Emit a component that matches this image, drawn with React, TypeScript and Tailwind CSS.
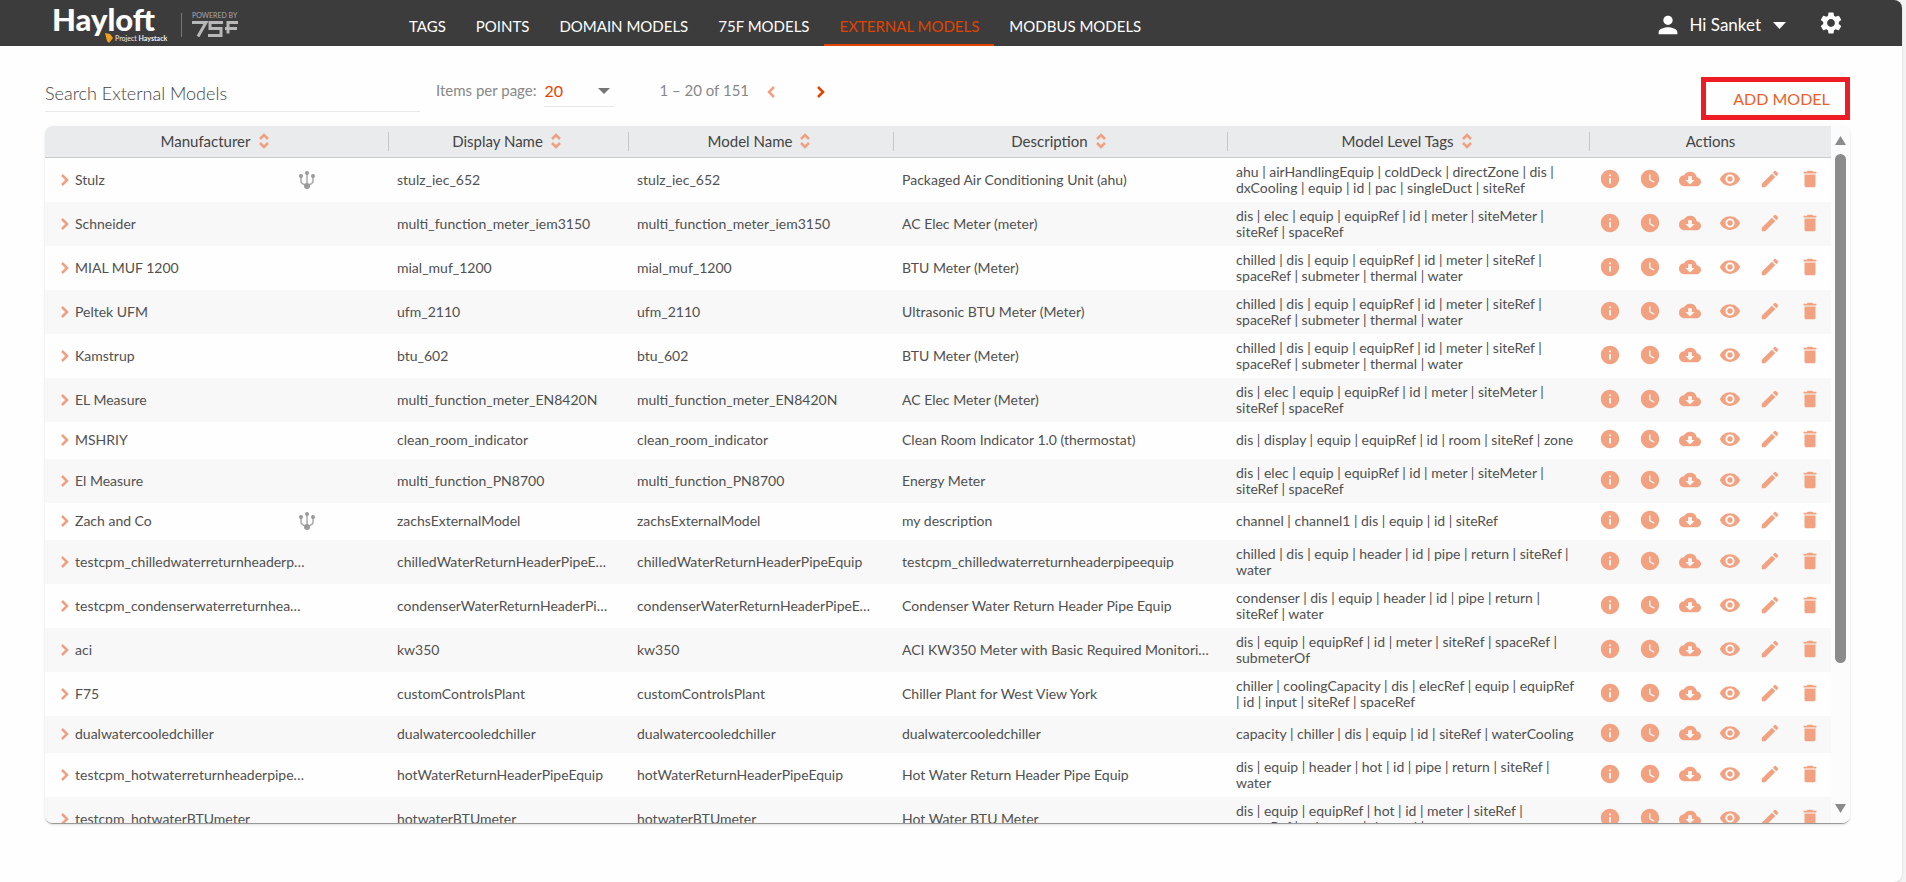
import { useState } from 'react'
import { MdInfo, MdWatchLater, MdCloudDownload, MdVisibility, MdEdit, MdDelete, MdSettings, MdPerson } from 'react-icons/md'

type Model = {
  manufacturer: string
  display: string
  model: string
  description: string
  tags: string
  linked?: boolean
}

const MODELS: Model[] = [
  { manufacturer: 'Stulz', display: 'stulz_iec_652', model: 'stulz_iec_652', description: 'Packaged Air Conditioning Unit (ahu)', tags: 'ahu | airHandlingEquip | coldDeck | directZone | dis | dxCooling | equip | id | pac | singleDuct | siteRef', linked: true },
  { manufacturer: 'Schneider', display: 'multi_function_meter_iem3150', model: 'multi_function_meter_iem3150', description: 'AC Elec Meter (meter)', tags: 'dis | elec | equip | equipRef | id | meter | siteMeter | siteRef | spaceRef' },
  { manufacturer: 'MIAL MUF 1200', display: 'mial_muf_1200', model: 'mial_muf_1200', description: 'BTU Meter (Meter)', tags: 'chilled | dis | equip | equipRef | id | meter | siteRef | spaceRef | submeter | thermal | water' },
  { manufacturer: 'Peltek UFM', display: 'ufm_2110', model: 'ufm_2110', description: 'Ultrasonic BTU Meter (Meter)', tags: 'chilled | dis | equip | equipRef | id | meter | siteRef | spaceRef | submeter | thermal | water' },
  { manufacturer: 'Kamstrup', display: 'btu_602', model: 'btu_602', description: 'BTU Meter (Meter)', tags: 'chilled | dis | equip | equipRef | id | meter | siteRef | spaceRef | submeter | thermal | water' },
  { manufacturer: 'EL Measure', display: 'multi_function_meter_EN8420N', model: 'multi_function_meter_EN8420N', description: 'AC Elec Meter (Meter)', tags: 'dis | elec | equip | equipRef | id | meter | siteMeter | siteRef | spaceRef' },
  { manufacturer: 'MSHRIY', display: 'clean_room_indicator', model: 'clean_room_indicator', description: 'Clean Room Indicator 1.0 (thermostat)', tags: 'dis | display | equip | equipRef | id | room | siteRef | zone' },
  { manufacturer: 'El Measure', display: 'multi_function_PN8700', model: 'multi_function_PN8700', description: 'Energy Meter', tags: 'dis | elec | equip | equipRef | id | meter | siteMeter | siteRef | spaceRef' },
  { manufacturer: 'Zach and Co', display: 'zachsExternalModel', model: 'zachsExternalModel', description: 'my description', tags: 'channel | channel1 | dis | equip | id | siteRef', linked: true },
  { manufacturer: 'testcpm_chilledwaterreturnheaderpipeequip', display: 'chilledWaterReturnHeaderPipeEquip', model: 'chilledWaterReturnHeaderPipeEquip', description: 'testcpm_chilledwaterreturnheaderpipeequip', tags: 'chilled | dis | equip | header | id | pipe | return | siteRef | water' },
  { manufacturer: 'testcpm_condenserwaterreturnheaderpipeequip', display: 'condenserWaterReturnHeaderPipeEquip', model: 'condenserWaterReturnHeaderPipeEquip', description: 'Condenser Water Return Header Pipe Equip', tags: 'condenser | dis | equip | header | id | pipe | return | siteRef | water' },
  { manufacturer: 'aci', display: 'kw350', model: 'kw350', description: 'ACI KW350 Meter with Basic Required Monitoring Points', tags: 'dis | equip | equipRef | id | meter | siteRef | spaceRef | submeterOf' },
  { manufacturer: 'F75', display: 'customControlsPlant', model: 'customControlsPlant', description: 'Chiller Plant for West View York', tags: 'chiller | coolingCapacity | dis | elecRef | equip | equipRef | id | input | siteRef | spaceRef' },
  { manufacturer: 'dualwatercooledchiller', display: 'dualwatercooledchiller', model: 'dualwatercooledchiller', description: 'dualwatercooledchiller', tags: 'capacity | chiller | dis | equip | id | siteRef | waterCooling' },
  { manufacturer: 'testcpm_hotwaterreturnheaderpipeequip', display: 'hotWaterReturnHeaderPipeEquip', model: 'hotWaterReturnHeaderPipeEquip', description: 'Hot Water Return Header Pipe Equip', tags: 'dis | equip | header | hot | id | pipe | return | siteRef | water' },
  { manufacturer: 'testcpm_hotwaterBTUmeter', display: 'hotwaterBTUmeter', model: 'hotwaterBTUmeter', description: 'Hot Water BTU Meter', tags: 'dis | equip | equipRef | hot | id | meter | siteRef | spaceRef | submeter | thermal | water' },
]

const TABS = ['TAGS', 'POINTS', 'DOMAIN MODELS', '75F MODELS', 'EXTERNAL MODELS', 'MODBUS MODELS']
const COLUMNS = ['Manufacturer', 'Display Name', 'Model Name', 'Description', 'Model Level Tags']
const ACTIONS = [
  { label: 'Info', Icon: MdInfo },
  { label: 'History', Icon: MdWatchLater },
  { label: 'Download', Icon: MdCloudDownload },
  { label: 'View', Icon: MdVisibility },
  { label: 'Edit', Icon: MdEdit },
  { label: 'Delete', Icon: MdDelete },
]

function Logo() {
  return (
    <svg width="196" height="46" viewBox="0 0 196 46" role="img" aria-label="Hayloft, powered by 75F" fontFamily="Lato, sans-serif">
      <text x="0" y="31" fontSize="31" fontWeight="900" fill="#fff">Hayloft</text>
      <path d="M53 33l5 1 3 4-4 5-2-2-1-4z" fill="#f0a020" />
      <text x="63" y="41" fontSize="7" fill="#eee">
        Project <tspan fontWeight="700">Haystack</tspan>
      </text>
      <path d="M129.500 13v24" stroke="#777" />
      <text x="140" y="18" fontSize="7" fill="#aaa">POWERED BY</text>
      <g fill="none" stroke="#b8b8b8" strokeWidth="3">
        <path d="M140 22.500h14l-8 14" />
        <path d="M171 22.500h-13v6h11v7h-13" />
        <path d="M186 22.500h-10v11M173 28.500h12" />
      </g>
    </svg>
  )
}

function SortIcon() {
  return (
    <svg width="10" height="16" viewBox="0 0 10 16" fill="none" stroke="#f0a080" strokeWidth="2.500" aria-hidden="true">
      <path d="M1 6l4-4 4 4M1 10l4 4 4-4" />
    </svg>
  )
}

function Chevron({ flip = false, className = '' }: { flip?: boolean; className?: string }) {
  return (
    <svg width="8" height="14" viewBox="0 0 8 14" fill="none" stroke="currentColor" strokeWidth="2.500" className={className} aria-hidden="true">
      <path d={flip ? 'M7 2L2 7l5 5' : 'M1 2l5 5-5 5'} />
    </svg>
  )
}

function LinkedIcon() {
  return (
    <svg width="16" height="18" viewBox="0 0 16 18" fill="#999" aria-label="Linked" className="shrink-0">
      <path d="M2 6v4q0 3 5 4M14 6v4q0 3-5 4M8 3v10" fill="none" stroke="#aaa" strokeWidth="1.500" />
      <circle cx="2" cy="5" r="2" />
      <circle cx="8" cy="2" r="2" />
      <circle cx="14" cy="5" r="2" />
      <circle cx="8" cy="15" r="3" />
    </svg>
  )
}

function Header() {
  return (
    <header className="flex h-[46px] items-stretch rounded-tr-lg bg-[#3c3c3c] pl-[52px] pr-[58px] text-white">
      <div className="w-[342px]">
        <Logo />
      </div>
      <nav className="flex flex-1 items-stretch">
        {TABS.map(t => (
          <a
            key={t}
            href="#"
            className={
              t === 'EXTERNAL MODELS'
                ? 'flex items-center border-b-2 border-[#e24301] px-[15px] pt-2 text-[15px] text-[#e24301]'
                : 'flex items-center border-b-2 border-transparent px-[15px] pt-2 text-[15px]'
            }
          >
            {t}
          </a>
        ))}
      </nav>
      <button className="mr-6 flex items-center gap-2 pt-1 text-[17px]">
        <MdPerson size={28} />
        Hi Sanket
        <svg width="13" height="7" viewBox="0 0 13 7" fill="currentColor" className="ml-1 mr-2" aria-hidden="true"><path d="M0 0h13L6.500 7z" /></svg>
      </button>
      <button aria-label="Settings">
        <MdSettings size={26} />
      </button>
    </header>
  )
}

function Toolbar() {
  const [query, setQuery] = useState('')

  return (
    <div className="flex h-20 items-start pl-[45px] pr-[52px]">
      <input
        aria-label="Search External Models"
        placeholder="Search External Models"
        value={query}
        onChange={e => setQuery(e.target.value)}
        className="mt-[30px] h-9 w-[375px] border-b border-[#e8e8e8] pb-0.5 text-lg font-light outline-none placeholder:text-[#444]"
      />
      <label htmlFor="page-size" className="ml-4 mt-[33px] text-[15px] text-[#888]">Items per page:</label>
      <div className="relative ml-2 mt-7 w-[70px] border-b border-[#e8e8e8]">
        <select id="page-size" defaultValue="20" className="h-8 w-full appearance-none pt-0.5 text-base text-[#e24301] outline-none">
          <option>20</option>
          <option>50</option>
        </select>
        <svg width="12" height="6" viewBox="0 0 12 6" fill="#757575" className="pointer-events-none absolute right-1 top-[14px]" aria-hidden="true"><path d="M0 0h12L6 6z" /></svg>
      </div>
      <span className="ml-[45px] mt-[33px] text-[15px] text-[#888]">1 – 20 of 151</span>
      <button aria-label="Previous page" className="ml-[18px] mt-[39px] text-[#f0a080]"><Chevron flip /></button>
      <button aria-label="Next page" className="ml-[42px] mt-[39px] text-[#e24301]"><Chevron /></button>
      <button className="ml-auto mt-[31px] h-[43px] w-[149px] border-5 border-[#ee1c25] pl-3 text-base text-[#e8602c]">ADD MODEL</button>
    </div>
  )
}

function ModelsTable() {
  return (
    <div className="ml-[45px] mr-[52px] flex h-[698px] overflow-hidden rounded-lg border-b border-[#999] shadow">
      <div className="min-w-0 flex-1 overflow-hidden">
        <table className="w-full table-fixed border-collapse text-sm text-[#505050]">
          <colgroup>
            <col className="w-[344px]" />
            <col className="w-[240px]" />
            <col className="w-[265px]" />
            <col className="w-[334px]" />
            <col className="w-[362px]" />
            <col />
          </colgroup>
          <thead>
            <tr className="h-[31px] border-b border-[#c8cacc] bg-[#e9ebed] text-[15px] text-[#444]">
              {COLUMNS.map(c => (
                <th key={c} scope="col" className="p-0 font-normal">
                  <div className="flex h-[19px] items-center justify-center gap-2 border-r border-[#c4c6c8] pr-1">
                    {c}
                    <SortIcon />
                  </div>
                </th>
              ))}
              <th scope="col" className="p-0 font-normal">Actions</th>
            </tr>
          </thead>
          <tbody>
            {MODELS.map(m => (
              <tr key={m.manufacturer} className="h-[37px] even:bg-[#f8f8f8]">
                <td className="py-1.5 pl-4">
                  <div className="flex items-center">
                    <Chevron className="mr-1.5 shrink-0 text-[#f0a080]" />
                    <span className={m.linked ? 'w-56 truncate' : 'w-[231px] truncate'}>{m.manufacturer}</span>
                    {m.linked && <LinkedIcon />}
                  </div>
                </td>
                <td className="truncate pl-2 pr-[18px]">{m.display}</td>
                <td className="truncate pl-2 pr-[18px]">{m.model}</td>
                <td className="truncate pl-2 pr-[18px]">{m.description}</td>
                <td className="py-1.5 pl-2 pr-[10px] leading-4">{m.tags}</td>
                <td className="p-0 pb-0.5">
                  <div className="flex">
                    {ACTIONS.map(({ label, Icon }) => (
                      <button key={label} aria-label={label} className="flex w-10 shrink-0 justify-center text-[#f2a181]">
                        <Icon size={22} />
                      </button>
                    ))}
                  </div>
                </td>
              </tr>
            ))}
          </tbody>
        </table>
      </div>
      <div className="flex w-[19px] flex-col items-center bg-[#fcfcfc] py-[10px]" aria-hidden="true">
        <svg width="11" height="9" viewBox="0 0 11 9" fill="#8b8b8b"><path d="M0 9l5.500-9L11 9z" /></svg>
        <div className="mt-[9px] h-[509px] w-[11px] rounded-full bg-[#8b8b8b]" />
        <svg width="11" height="9" viewBox="0 0 11 9" fill="#8b8b8b" className="mt-auto"><path d="M0 0l5.500 9L11 0z" /></svg>
      </div>
    </div>
  )
}

export default function App() {
  return (
    <div className="h-screen overflow-hidden bg-[#f4f4f4] pr-1 font-['Lato',sans-serif]">
      <div className="h-full rounded-r-lg bg-[#fefefe] shadow">
        <Header />
        <Toolbar />
        <ModelsTable />
      </div>
    </div>
  )
}
